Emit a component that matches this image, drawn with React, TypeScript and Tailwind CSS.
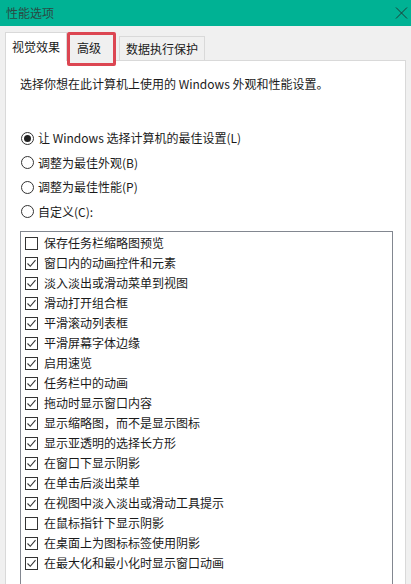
import React from 'react';

const font = { fontFamily: '"Noto Sans CJK SC", "Microsoft YaHei", sans-serif' };

const items: [string, boolean][] = [
  ['保存任务栏缩略图预览', false],
  ['窗口内的动画控件和元素', true],
  ['淡入淡出或滑动菜单到视图', true],
  ['滑动打开组合框', true],
  ['平滑滚动列表框', true],
  ['平滑屏幕字体边缘', true],
  ['启用速览', true],
  ['任务栏中的动画', true],
  ['拖动时显示窗口内容', true],
  ['显示缩略图，而不是显示图标', true],
  ['显示亚透明的选择长方形', true],
  ['在窗口下显示阴影', true],
  ['在单击后淡出菜单', true],
  ['在视图中淡入淡出或滑动工具提示', true],
  ['在鼠标指针下显示阴影', false],
  ['在桌面上为图标标签使用阴影', true],
  ['在最大化和最小化时显示窗口动画', true],
];

function Radio({ checked, label }: { checked?: boolean; label: string }) {
  return (
    <div className="flex items-center h-[24.5px]">
      <span className="w-[13px] h-[13px] rounded-full border border-[#333] bg-white flex items-center justify-center mr-[4px]">
        {checked && <span className="w-[7px] h-[7px] rounded-full bg-[#222]" />}
      </span>
      <span>{label}</span>
    </div>
  );
}

function Checkbox({ checked, label }: { checked: boolean; label: string }) {
  return (
    <div className="flex items-center h-[20px]">
      <span className="w-[13px] h-[13px] border border-[#333] bg-white flex items-center justify-center mr-[6px] shrink-0">
        {checked && (
          <svg width="11" height="11" viewBox="0 0 11 11">
            <path d="M1.5 5.5 L4.3 8.3 L9.5 2.2" fill="none" stroke="#333" strokeWidth="1.1" />
          </svg>
        )}
      </span>
      <span className="whitespace-nowrap">{label}</span>
    </div>
  );
}

export default function App() {
  return (
    <div className="w-[411px] h-[584px] overflow-hidden bg-[#f0f0f0] text-[12px] text-[#1a1a1a]" style={font}>
      <div className="h-[26px] bg-[#00b294] flex items-center justify-between pl-[6px] pr-[3px]">
        <span className="text-[#2b4a44]">性能选项</span>
        <svg width="13" height="12" viewBox="0 0 13 12">
          <path d="M1 0.5 L12 11.5 M12 0.5 L1 11.5" stroke="#1f3b36" strokeWidth="1" />
        </svg>
      </div>

      <div className="flex items-end pl-[5px] pt-[5px] h-[34px]">
        <div className="relative z-10 h-[29px] -mb-px bg-white border border-b-0 border-[#d9d9d9] px-[6px] pt-[5px]">
          视觉效果
        </div>
        <div className="relative z-20 self-start mt-[1px] h-[34px] w-[49px] border-[3px] border-[#dc4652] rounded-[2px] bg-[#f0f0f0] px-[7px] pt-[4px]">
          高级
        </div>
        <div className="h-[24px] bg-[#f0f0f0] border border-b-0 border-[#d9d9d9] ml-[3px] px-[6px] pt-[3px]">
          数据执行保护
        </div>
      </div>

      <div className="mx-[5px] h-[560px] bg-white border border-[#d9d9d9] pl-[14px] pr-[12px]">
        <p className="mt-[15px] leading-[16px]">选择你想在此计算机上使用的 Windows 外观和性能设置。</p>
        <div className="mt-[34px] pl-px">
          <Radio checked label="让 Windows 选择计算机的最佳设置(L)" />
          <Radio label="调整为最佳外观(B)" />
          <Radio label="调整为最佳性能(P)" />
          <Radio label="自定义(C):" />
        </div>
        <div className="mt-[7px] border border-[#828790] pl-[4px] pt-[1px] h-[400px]">
          {items.map(([label, checked]) => (
            <Checkbox key={label} checked={checked} label={label} />
          ))}
        </div>
      </div>
    </div>
  );
}
